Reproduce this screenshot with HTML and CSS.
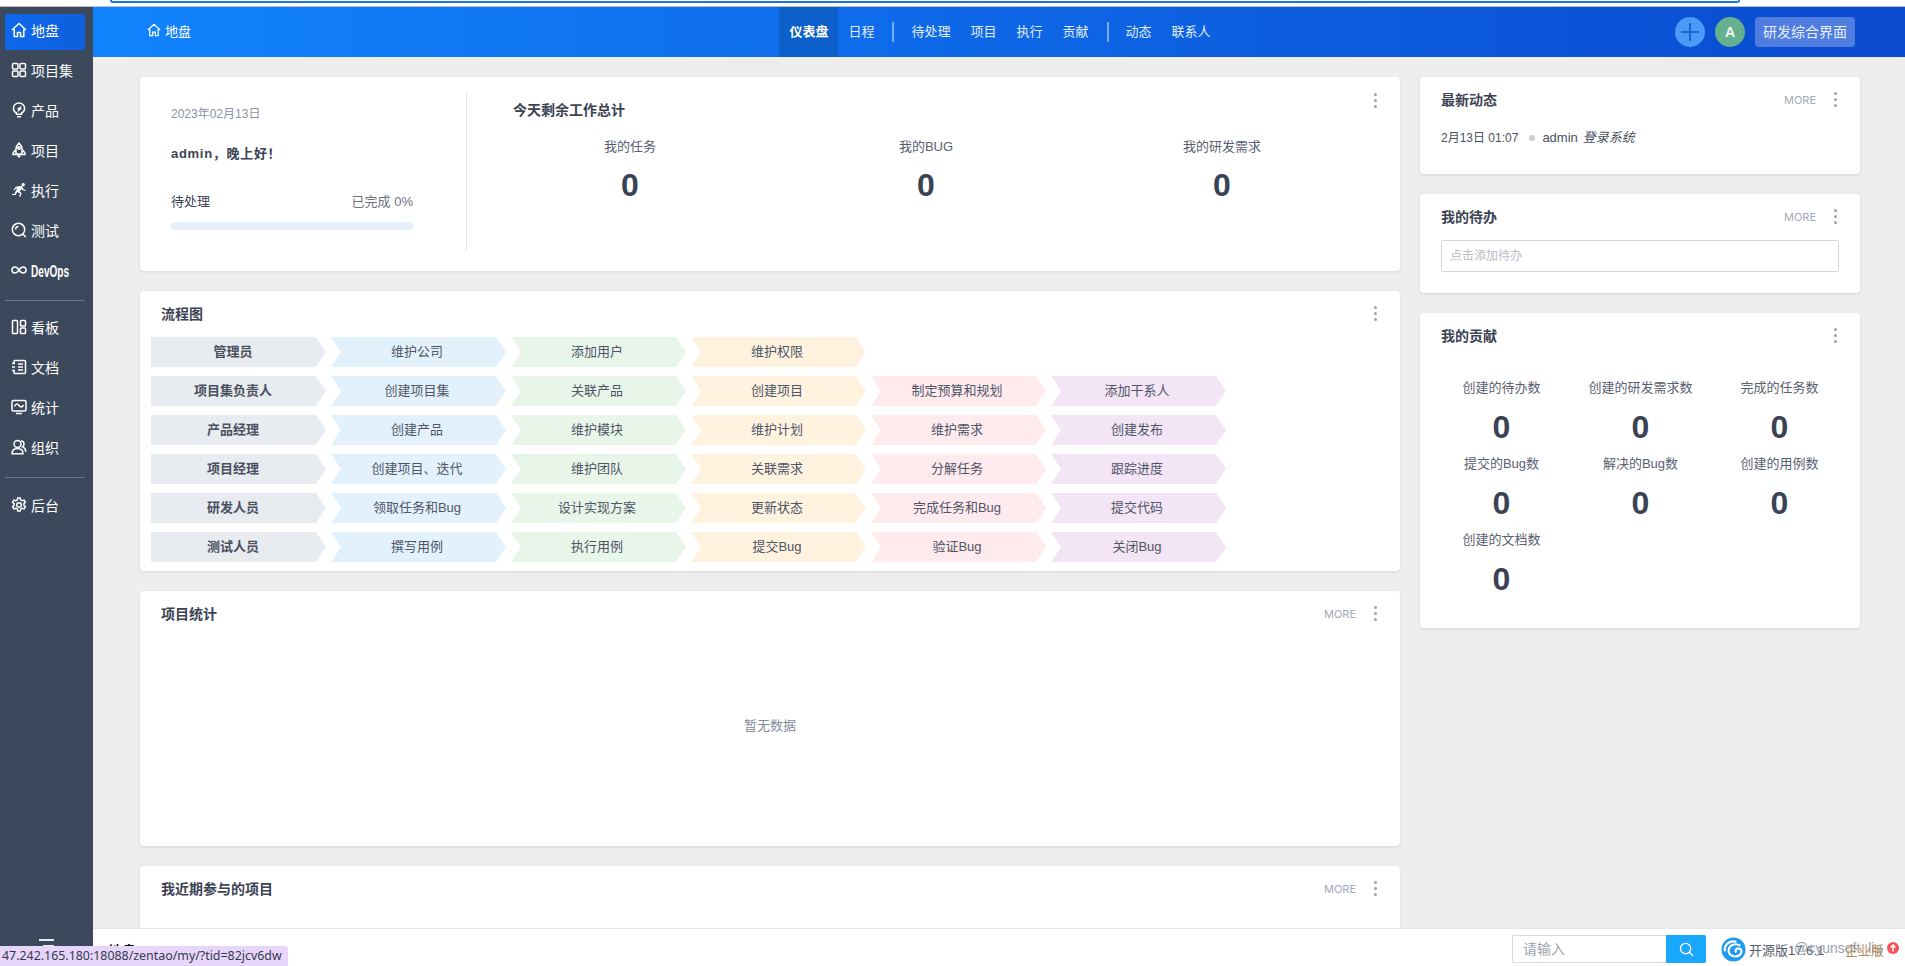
FILE: index.html
```html
<!DOCTYPE html>
<html lang="zh-CN">
<head>
    <meta charset="UTF-8">
    <title>地盘</title>
    <link rel="stylesheet" href="styles.css">
</head>
<body>
    <div class="browser-strip"><div class="browser-outline"></div></div>
    <div class="app">
        <aside class="sidebar">
            <a class="side-item active">
                <svg class="side-icon" viewBox="0 0 16 16"><path d="M1 8 8 1.500 15 8M3.200 7v7.500h3.300v-4h3v4h3.300V7"/></svg>
                <span>地盘</span>
            </a>
            <a class="side-item">
                <svg class="side-icon" viewBox="0 0 16 16"><rect x="1.500" y="1.500" width="5.500" height="5.500" rx="1"/><rect x="9" y="1.500" width="5.500" height="5.500" rx="1"/><rect x="1.500" y="9" width="5.500" height="5.500" rx="1"/><rect x="9" y="9" width="5.500" height="5.500" rx="1"/></svg>
                <span>项目集</span>
            </a>
            <a class="side-item">
                <svg class="side-icon" viewBox="0 0 16 16"><path d="M5.500 12.200V11C3.600 10 2.400 8.400 2.400 6.400 2.400 3.400 5 1 8 1s5.600 2.400 5.600 5.400c0 2-1.200 3.600-3.100 4.600v1.200zM6 14.800h4"/><path class="solid" d="M10.800 3.600 6 6.800l1.300 1-1.100 2.600 4.600-3.600-1.300-.8z"/></svg>
                <span>产品</span>
            </a>
            <a class="side-item">
                <svg class="side-icon" viewBox="0 0 16 16"><path d="M8 1C5.800 3 5 5 5 7v5h6V7c0-2-.8-4-3-6zM5 7.500 2.200 10.500 2 12.500h12l-.2-2L11 7.500"/><circle cx="8" cy="6" r="1.200"/><path class="solid" d="M6 13.200h4L8.800 15.500H7.200z"/></svg>
                <span>项目</span>
            </a>
            <a class="side-item">
                <svg class="side-icon" viewBox="0 0 16 16"><circle class="solid" cx="12.200" cy="2.800" r="1.700"/><path class="solid" d="M7 4.200 11 4l1.500 3.200 2.200.8-.4 1-3-1-.9-1-1.500 2.800 1.800 1.400-1.500 3.800-1.100-.4 1-3-2.800-1.500-1.800 2.900H1v-1.100h2.300l2.900-5.400-1.600.3-1 1.600-1-.5L4.500 5z"/></svg>
                <span>执行</span>
            </a>
            <a class="side-item">
                <svg class="side-icon" viewBox="0 0 16 16"><circle cx="7.500" cy="7.500" r="6.200"/><path d="M11.800 12 14.800 15M4.500 7.500A3 3 0 0 1 7.500 4.500"/></svg>
                <span>测试</span>
            </a>
            <a class="side-item">
                <svg class="side-icon" viewBox="0 0 16 16"><path d="M8 8C6.800 6 5.600 5 4 5a3 3 0 0 0 0 6c1.600 0 2.800-1 4-3s2.400-3 4-3a3 3 0 0 1 0 6c-1.600 0-2.800-1-4-3z"/></svg>
                <span class="side-narrow">DevOps</span>
            </a>
            <div class="side-divider first"></div>
            <a class="side-item">
                <svg class="side-icon" viewBox="0 0 16 16"><rect x="1.500" y="1.500" width="5" height="13" rx=".8"/><rect x="9.500" y="1.500" width="5" height="5.500" rx=".8"/><rect x="9.500" y="9" width="5" height="5.500" rx=".8"/></svg>
                <span>看板</span>
            </a>
            <a class="side-item">
                <svg class="side-icon" viewBox="0 0 16 16"><path d="M3 4V2.500A1 1 0 0 1 4 1.500h9.500a1 1 0 0 1 1 1v11a1 1 0 0 1-1 1H4a1 1 0 0 1-1-1V12M1 4.500h3M1 8h3M1 11.500h3M7 5h5M7 8h5M7 11h5"/></svg>
                <span>文档</span>
            </a>
            <a class="side-item">
                <svg class="side-icon" viewBox="0 0 16 16"><rect x="1" y="1.500" width="14" height="10.500" rx="1.500"/><path d="M3.500 7.500C5 4.500 6.500 4.500 8 6.500s3 2 4.500-.5M5 14.500h6"/></svg>
                <span>统计</span>
            </a>
            <a class="side-item">
                <svg class="side-icon" viewBox="0 0 16 16"><circle cx="6.500" cy="5" r="3.500"/><path d="M1 14.800c0-3.500 2.200-5.300 5.500-5.300s5.500 1.800 5.500 5.300zM10 1.700c1.800.2 3 1.500 3 3.300 0 1.200-.6 2.200-1.500 2.800 2 .8 3.200 2.800 3.200 5"/></svg>
                <span>组织</span>
            </a>
            <div class="side-divider"></div>
            <a class="side-item">
                <svg class="side-icon" viewBox="0 0 16 16"><path d="M6.700 1h2.600l.4 2 1.500.8 1.900-.7 1.300 2.300-1.500 1.300v1.600l1.500 1.300-1.300 2.300-1.900-.7-1.500.8-.4 2H6.700l-.4-2-1.500-.8-1.900.7-1.300-2.300 1.500-1.300V6.700L1.600 5.400l1.300-2.300 1.900.7 1.500-.8z"/><circle cx="8" cy="8" r="2.300"/></svg>
                <span>后台</span>
            </a>
            <div class="side-collapse">
                <i></i><i class="short"></i><i></i>
            </div>
        </aside>

        <div class="main">
            <header class="topbar">
                <div class="crumb">
                    <svg class="crumb-icon" viewBox="0 0 16 16"><path d="M1 8 8 1.500 15 8M3.200 7v7.500h3.300v-4h3v4h3.300V7"/></svg>
                    <span>地盘</span>
                </div>
                <nav class="top-nav">
                    <a class="nav-item active">仪表盘</a>
                    <a class="nav-item">日程</a>
                    <span class="nav-sep"></span>
                    <a class="nav-item">待处理</a>
                    <a class="nav-item">项目</a>
                    <a class="nav-item">执行</a>
                    <a class="nav-item">贡献</a>
                    <span class="nav-sep"></span>
                    <a class="nav-item">动态</a>
                    <a class="nav-item">联系人</a>
                </nav>
                <div class="top-tools">
                    <span class="plus-btn"><svg viewBox="0 0 30 30"><path d="M15 6v18M6 15h18"/></svg></span>
                    <span class="avatar">A</span>
                    <span class="vision-btn">研发综合界面</span>
                </div>
            </header>

            <div class="content">
                <div class="col-left">
                    <section class="card welcome">
                        <span class="dots abs"><i></i><i></i><i></i></span>
                        <div class="welcome-left">
                            <div class="date">2023年02月13日</div>
                            <div class="hello">admin，晚上好！</div>
                            <div class="todo-row"><span>待处理</span><span class="done">已完成 0%</span></div>
                            <div class="progress"></div>
                        </div>
                        <div class="welcome-right">
                            <h3 class="today-title">今天剩余工作总计</h3>
                            <div class="today-stats">
                                <div class="stat"><div class="stat-label">我的任务</div><div class="stat-num">0</div></div>
                                <div class="stat"><div class="stat-label">我的BUG</div><div class="stat-num">0</div></div>
                                <div class="stat"><div class="stat-label">我的研发需求</div><div class="stat-num">0</div></div>
                            </div>
                        </div>
                    </section>

                    <section class="card">
                        <div class="card-head">
                            <h3>流程图</h3>
                            <span class="dots"><i></i><i></i><i></i></span>
                        </div>
                        <div class="flow">
                            <div class="flow-row">
                                <span class="step role">管理员</span>
                                <span class="step blue">维护公司</span>
                                <span class="step green">添加用户</span>
                                <span class="step orange">维护权限</span>
                            </div>
                            <div class="flow-row">
                                <span class="step role">项目集负责人</span>
                                <span class="step blue">创建项目集</span>
                                <span class="step green">关联产品</span>
                                <span class="step orange">创建项目</span>
                                <span class="step pink">制定预算和规划</span>
                                <span class="step purple">添加干系人</span>
                            </div>
                            <div class="flow-row">
                                <span class="step role">产品经理</span>
                                <span class="step blue">创建产品</span>
                                <span class="step green">维护模块</span>
                                <span class="step orange">维护计划</span>
                                <span class="step pink">维护需求</span>
                                <span class="step purple">创建发布</span>
                            </div>
                            <div class="flow-row">
                                <span class="step role">项目经理</span>
                                <span class="step blue">创建项目、迭代</span>
                                <span class="step green">维护团队</span>
                                <span class="step orange">关联需求</span>
                                <span class="step pink">分解任务</span>
                                <span class="step purple">跟踪进度</span>
                            </div>
                            <div class="flow-row">
                                <span class="step role">研发人员</span>
                                <span class="step blue">领取任务和Bug</span>
                                <span class="step green">设计实现方案</span>
                                <span class="step orange">更新状态</span>
                                <span class="step pink">完成任务和Bug</span>
                                <span class="step purple">提交代码</span>
                            </div>
                            <div class="flow-row">
                                <span class="step role">测试人员</span>
                                <span class="step blue">撰写用例</span>
                                <span class="step green">执行用例</span>
                                <span class="step orange">提交Bug</span>
                                <span class="step pink">验证Bug</span>
                                <span class="step purple">关闭Bug</span>
                            </div>
                        </div>
                    </section>

                    <section class="card">
                        <div class="card-head">
                            <h3>项目统计</h3>
                            <span class="more">MORE</span>
                            <span class="dots"><i></i><i></i><i></i></span>
                        </div>
                        <div class="empty">暂无数据</div>
                    </section>

                    <section class="card recent">
                        <div class="card-head">
                            <h3>我近期参与的项目</h3>
                            <span class="more">MORE</span>
                            <span class="dots"><i></i><i></i><i></i></span>
                        </div>
                    </section>
                </div>

                <div class="col-right">
                    <section class="card">
                        <div class="card-head">
                            <h3>最新动态</h3>
                            <span class="more">MORE</span>
                            <span class="dots"><i></i><i></i><i></i></span>
                        </div>
                        <div class="dynamic">
                            <span>2月13日 01:07</span>
                            <i class="dynamic-dot"></i>
                            <span class="dynamic-user">admin</span>
                            <em>登录系统</em>
                        </div>
                    </section>

                    <section class="card">
                        <div class="card-head">
                            <h3>我的待办</h3>
                            <span class="more">MORE</span>
                            <span class="dots"><i></i><i></i><i></i></span>
                        </div>
                        <div class="todo-box"><input class="todo-input" placeholder="点击添加待办"></div>
                    </section>

                    <section class="card">
                        <div class="card-head">
                            <h3>我的贡献</h3>
                            <span class="dots"><i></i><i></i><i></i></span>
                        </div>
                        <div class="contrib">
                            <div class="stat"><div class="stat-label">创建的待办数</div><div class="stat-num">0</div></div>
                            <div class="stat"><div class="stat-label">创建的研发需求数</div><div class="stat-num">0</div></div>
                            <div class="stat"><div class="stat-label">完成的任务数</div><div class="stat-num">0</div></div>
                            <div class="stat"><div class="stat-label">提交的Bug数</div><div class="stat-num">0</div></div>
                            <div class="stat"><div class="stat-label">解决的Bug数</div><div class="stat-num">0</div></div>
                            <div class="stat"><div class="stat-label">创建的用例数</div><div class="stat-num">0</div></div>
                            <div class="stat"><div class="stat-label">创建的文档数</div><div class="stat-num">0</div></div>
                        </div>
                    </section>
                </div>
            </div>

            <footer class="footer">
                <span class="foot-crumb">地盘</span>
                <div class="search">
                    <input class="search-input" placeholder="请输入">
                    <span class="search-btn"><svg viewBox="0 0 16 16"><circle cx="7" cy="7" r="5.500"/><path d="M11 11l4 4"/></svg></span>
                </div>
                <div class="version">
                    <svg class="version-logo" viewBox="0 0 26 26">
                        <circle class="logo-bg" cx="13" cy="13" r="12.500"/>
                        <path class="logo-swirl" d="M4 15C3 8 9 3 16 5M20 9c-5-3-11-1-12 4-1 6 6 9 11 6 3-2 3-6 0-7-3-1-5 2-3 4"/>
                    </svg>
                    <span class="version-text">开源版17.6.1</span>
                    <span class="version-author">@cyunsoft_liu</span>
                    <span class="version-pro">企业版</span>
                    <span class="version-up"><svg viewBox="0 0 12 12"><path d="M6 9.500V3M3.500 5.500 6 3l2.500 2.500"/></svg></span>
                </div>
            </footer>
        </div>
    </div>
    <div class="status-bubble">47.242.165.180:18088/zentao/my/?tid=82jcv6dw</div>
</body>
</html>
```

FILE: styles.css
```css
* {
    box-sizing: border-box;
}

html, body {
    margin: 0;
    height: 966px;
    overflow: hidden;
}

body {
    font-family: "Liberation Sans", "Noto Sans CJK SC", sans-serif;
    font-size: 13px;
    color: #3c4353;
    background: #eeeeee;
    display: flex;
    flex-direction: column;
}

i {
    font-style: normal;
}

/* 顶部浏览器残留 */
.browser-strip {
    height: 7px;
    background: #fff;
    border-bottom: 1px solid #bdbdbd;
    padding: 0 165px 0 110px;
    flex-shrink: 0;
}

.browser-outline {
    height: 3px;
    border: 2px solid #1a73e8;
    border-top: none;
    border-radius: 0 0 8px 8px;
}

.app {
    flex: 1;
    display: flex;
    min-height: 0;
}

/* 左侧菜单 */
.sidebar {
    width: 93px;
    flex-shrink: 0;
    background: #3c495c;
    padding-top: 7px;
    display: flex;
    flex-direction: column;
    align-items: stretch;
}

.side-item {
    height: 36px;
    margin: 0 8px 4px 5px;
    padding: 0 0 4px 6px;
    display: flex;
    align-items: center;
    gap: 4px;
    color: #fff;
    font-size: 14px;
    border-radius: 2px;
}

.side-item.active {
    background: linear-gradient(90deg, #0f68ec, #0d5fdc);
}

.side-icon {
    width: 16px;
    height: 16px;
    flex-shrink: 0;
    fill: none;
    stroke: #fff;
    stroke-width: 1.5;
}

.side-icon .solid {
    fill: #fff;
    stroke: none;
}

.side-narrow {
    margin-top: 3px;
    font-weight: 700;
    font-size: 16px;
    transform: scaleX(0.63);
    transform-origin: left center;
}

.side-divider {
    height: 1px;
    background: #6a7688;
    margin: 6px 8px 11px 5px;
}

.side-divider.first {
    margin: 6px 8px 10px 5px;
}

.side-collapse {
    margin-top: auto;
    padding-bottom: 13px;
    display: flex;
    flex-direction: column;
    align-items: center;
    gap: 4px;
}

.side-collapse i {
    width: 15px;
    height: 2px;
    background: #e8ebef;
}

.side-collapse i.short {
    width: 11px;
    margin-left: 4px;
}

.main {
    flex: 1;
    min-width: 0;
    display: flex;
    flex-direction: column;
}

/* 顶栏 */
.topbar {
    height: 50px;
    flex-shrink: 0;
    background: linear-gradient(90deg, #1184fd, #0a4acf);
    display: grid;
    grid-template-columns: 1fr auto 1fr;
    align-items: stretch;
    color: #fff;
}

.crumb {
    display: flex;
    align-items: center;
    gap: 4px;
    padding: 0 0 4px 54px;
}

.crumb-icon {
    width: 14px;
    height: 14px;
    fill: none;
    stroke: #fff;
    stroke-width: 1.4;
}

.top-nav {
    display: flex;
    align-items: stretch;
    margin-left: 2px;
    color: #e3ecfb;
}

.nav-item {
    padding: 0 10px 4px;
    display: flex;
    align-items: center;
}

.nav-item.active {
    background: #0d5fcb;
    color: #fff;
    font-weight: 700;
}

.nav-sep {
    width: 2px;
    height: 20px;
    align-self: center;
    background: rgba(255, 255, 255, 0.45);
    margin: 0 7px 0 8px;
}

.top-tools {
    display: flex;
    align-items: center;
    justify-content: flex-end;
    gap: 10px;
    padding-right: 50px;
}

.plus-btn {
    width: 30px;
    height: 30px;
    border-radius: 50%;
    background: #4a9bf8;
}

.plus-btn svg {
    display: block;
    fill: none;
    stroke: #1d66d4;
    stroke-width: 2;
}

.avatar {
    width: 30px;
    height: 30px;
    border-radius: 50%;
    background: #66b08f;
    color: #f2f7f4;
    font-weight: 700;
    font-size: 14px;
    display: flex;
    align-items: center;
    justify-content: center;
}

.vision-btn {
    width: 100px;
    height: 30px;
    padding-bottom: 2px;
    border-radius: 4px;
    background: #4e7cdf;
    color: #e8eefc;
    font-size: 14px;
    display: flex;
    align-items: center;
    justify-content: center;
}

/* 内容区 */
.content {
    flex: 1;
    min-height: 0;
    overflow: hidden;
    padding: 20px 45px 0 47px;
    display: grid;
    grid-template-columns: 1260px 440px;
    column-gap: 20px;
    align-items: start;
}

.col-left, .col-right {
    display: flex;
    flex-direction: column;
    gap: 20px;
}

.card {
    position: relative;
    background: #fff;
    border-radius: 4px;
    box-shadow: 0 1px 3px rgba(0, 0, 0, 0.1);
}

.card-head {
    height: 46px;
    padding: 0 22px 2px 21px;
    display: flex;
    align-items: center;
}

.card-head h3 {
    margin: 0;
    margin-right: auto;
    font-size: 14px;
    font-weight: 700;
    color: #3c4353;
}

.more {
    font-family: Inter, "Liberation Sans", sans-serif;
    font-size: 11px;
    color: #a3a9b8;
    margin: 2px 18px 0 0;
}

.dots {
    display: flex;
    flex-direction: column;
    gap: 3px;
    width: 4px;
}

.dots i {
    width: 3px;
    height: 3px;
    border-radius: 50%;
    background: #9aa1b3;
}

.dots.abs {
    position: absolute;
    right: 22px;
    top: 16px;
}

/* 欢迎卡片 */
.welcome {
    height: 194px;
    display: flex;
}

.welcome-left {
    width: 327px;
    height: 157px;
    margin-top: 16px;
    padding: 11px 53px 0 31px;
    border-right: 1px solid #e1e3e8;
}

.date {
    font-size: 12px;
    color: #8d93a3;
    line-height: 20px;
}

.hello {
    font-weight: 700;
    line-height: 20px;
    margin-top: 20px;
    letter-spacing: 0.7px;
}

.todo-row {
    display: flex;
    justify-content: space-between;
    line-height: 20px;
    margin-top: 28px;
}

.done {
    color: #6b7180;
}

.progress {
    height: 8px;
    margin-top: 10px;
    border-radius: 3px;
    background: #e8f0fa;
}

.welcome-right {
    flex: 1;
    padding-top: 23px;
}

.today-title {
    margin: 0 0 17px 46px;
    font-size: 14px;
    line-height: 20px;
    font-weight: 700;
}

.today-stats {
    margin-left: 15px;
    display: grid;
    grid-template-columns: repeat(3, 296px);
}

.stat {
    text-align: center;
}

.stat-label {
    line-height: 20px;
    color: #5a6072;
}

.stat-num {
    font-size: 32px;
    font-weight: 700;
    line-height: 38px;
    margin-top: 9px;
    color: #3a4356;
}

/* 流程图 */
.flow {
    padding: 0 11px 9px;
    display: flex;
    flex-direction: column;
    gap: 9px;
}

.flow-row {
    display: flex;
    gap: 5px;
}

.step {
    width: 175px;
    height: 30px;
    padding: 0 3px 4px 0;
    display: flex;
    align-items: center;
    justify-content: center;
    color: #4f5566;
    clip-path: polygon(0 0, 165px 0, 175px 50%, 165px 100%, 0 100%, 10px 50%);
}

.step.role {
    padding-right: 11px;
    font-weight: 700;
    color: #4a5060;
    background: #e8ebf0;
    clip-path: polygon(0 0, 165px 0, 175px 50%, 165px 100%, 0 100%);
}

.step.blue { background: #e3f1fc; }
.step.green { background: #e8f5e9; }
.step.orange { background: #fff3e0; }
.step.pink { background: #ffebee; }
.step.purple { background: #f3e5f5; }

.empty {
    height: 209px;
    padding-bottom: 34px;
    display: flex;
    align-items: center;
    justify-content: center;
    color: #838a9b;
}

.recent {
    height: 200px;
}

/* 右栏 */
.dynamic {
    height: 51px;
    padding: 0 21px 21px;
    display: flex;
    align-items: center;
    font-size: 12px;
    line-height: 20px;
    color: #4a5060;
}

.dynamic-dot {
    width: 6px;
    height: 6px;
    border-radius: 50%;
    background: #c9ccd6;
    margin: 0 7px 0 11px;
}

.dynamic-user {
    font-size: 13px;
}

.dynamic em {
    margin-left: 5px;
    font-size: 13px;
    font-style: italic;
}

.todo-box {
    padding: 0 21px 21px;
}

.todo-input {
    display: block;
    width: 100%;
    height: 32px;
    padding: 0 8px;
    border: 1px solid #d5d7dc;
    border-radius: 2px;
    font: 12px "Liberation Sans", "Noto Sans CJK SC", sans-serif;
}

.todo-input::placeholder {
    color: #b8bcc6;
}

.contrib {
    padding: 19px 11px 30px 12px;
    display: grid;
    grid-template-columns: repeat(3, 139px);
    row-gap: 8px;
}

.contrib .stat-num {
    margin-top: 10px;
}

/* 底部 */
.footer {
    height: 38px;
    flex-shrink: 0;
    background: #fff;
    border-top: 1px solid #e6e8ec;
    display: flex;
    align-items: center;
}

.foot-crumb {
    margin-left: 15px;
    margin-top: 4px;
    font-size: 14px;
    font-weight: 700;
    color: #111;
}

.search {
    margin: 3px 0 0 auto;
    display: flex;
    height: 28px;
}

.search-input {
    width: 154px;
    height: 28px;
    padding: 0 10px;
    border: 1px solid #d9d9d9;
    border-right: none;
    border-radius: 2px 0 0 2px;
    font: 14px "Liberation Sans", "Noto Sans CJK SC", sans-serif;
}

.search-input::placeholder {
    color: #9da3b0;
}

.search-btn {
    width: 40px;
    height: 28px;
    background: #1aa8ff;
    border-radius: 0 2px 2px 0;
    display: flex;
    align-items: center;
    justify-content: center;
}

.search-btn svg {
    width: 15px;
    height: 15px;
    fill: none;
    stroke: #fff;
    stroke-width: 1.4;
}

.version {
    position: relative;
    width: 199px;
    height: 100%;
    flex-shrink: 0;
}

/* 这几段在原图里就是叠在一起的 */
.version-logo {
    position: absolute;
    left: 15px;
    top: 8px;
    width: 25px;
    height: 25px;
}

.logo-bg {
    fill: #1e9bf0;
}

.logo-swirl {
    fill: none;
    stroke: #fff;
    stroke-width: 2.200;
}

.version-text {
    position: absolute;
    left: 43px;
    top: 11px;
    font-size: 13px;
    color: #555b6c;
    white-space: nowrap;
}

.version-author {
    position: absolute;
    left: 88px;
    top: 11px;
    font-size: 14px;
    color: #9a9fac;
    white-space: nowrap;
}

.version-pro {
    position: absolute;
    left: 139px;
    top: 11px;
    font-size: 13px;
    color: #b08a5a;
    white-space: nowrap;
}

.version-up {
    position: absolute;
    left: 181px;
    top: 13px;
    width: 12px;
    height: 12px;
    border-radius: 50%;
    background: #f4525c;
}

.version-up svg {
    display: block;
    fill: none;
    stroke: #fff;
    stroke-width: 1.500;
}

.status-bubble {
    position: fixed;
    left: 0;
    bottom: 0;
    width: 288px;
    height: 20px;
    padding-left: 2px;
    background: #e8d5fb;
    border-radius: 0 3px 0 0;
    font-family: "Noto Sans", sans-serif;
    font-size: 12.400px;
    line-height: 20px;
    color: #333a4a;
    white-space: nowrap;
}
```
